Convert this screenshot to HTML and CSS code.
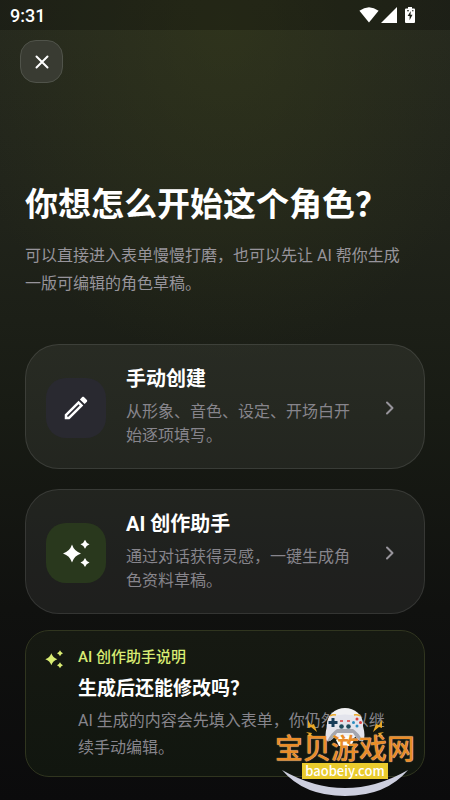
FILE: index.html
```html
<!DOCTYPE html>
<html lang="zh-CN">
<head>
<meta charset="utf-8">
<meta name="viewport" content="width=device-width, initial-scale=1">
<title>创建角色</title>
<link rel="stylesheet" href="styles.css">
</head>
<body>
<div class="screen">
  <header class="status">
    <span class="time">9:31</span>
    <span class="indicators">
      <svg width="20" height="16" viewBox="0 0 20 16"><path d="M10 15.5 0.4 3.8Q10-3.4 19.6 3.8Z"/></svg>
      <svg width="16" height="16" viewBox="0 0 16 16"><path d="M16 0V16H0Z"/></svg>
      <svg class="battery" width="10" height="16" viewBox="0 0 10 16"><path d="M3 0h4v1.500h2q1 0 1 1V15q0 1-1 1H1q-1 0-1-1V2.500q0-1 1-1h2Z"/><path class="bolt" d="M5.800 4 2.600 9h2v4.200L7.500 7.800h-2ZM2 3.300h2v1H2zM7 3.300h1.500v1H7z"/></svg>
    </span>
  </header>

  <main class="content">
    <button class="close" type="button" aria-label="关闭">
      <svg width="14" height="14" viewBox="0 0 14 14"><path d="M1.500 1.500 12.500 12.500M12.500 1.500 1.500 12.500"/></svg>
    </button>

    <section class="intro">
      <h1>你想怎么开始这个角色？</h1>
      <p>可以直接进入表单慢慢打磨，也可以先让 AI 帮你生成一版可编辑的角色草稿。</p>
    </section>

    <div class="options">
      <button class="option" type="button">
        <span class="tile">
          <svg width="30" height="30" viewBox="0 0 24 24"><path d="m14.060 9.020.92.920L5.920 19H5v-.920l9.060-9.060M17.660 3c-.250 0-.510.100-.700.290l-1.830 1.830 3.750 3.750 1.830-1.830c.390-.390.390-1.020 0-1.410l-2.340-2.340c-.200-.200-.450-.290-.710-.290zm-3.600 3.190L3 17.250V21h3.750L17.810 9.940l-3.750-3.750z"/></svg>
        </span>
        <span class="copy">
          <span class="name">手动创建</span>
          <span class="desc">从形象、音色、设定、开场白开始逐项填写。</span>
        </span>
        <svg class="chevron" width="24" height="24" viewBox="0 0 24 24"><path d="m9 6.500 5.500 5.500L9 17.500"/></svg>
      </button>

      <button class="option" type="button">
        <span class="tile tile-green">
          <svg width="30" height="30" viewBox="0 0 30 30"><path d="M11 6.500Q13.200 13.300 20 15.500 13.200 17.700 11 24.500 8.800 17.700 2 15.500 8.800 13.300 11 6.500ZM24 1.800Q25.100 5.100 28.500 6.300 25.100 7.500 24 10.800 22.900 7.500 19.500 6.300 22.900 5.100 24 1.800ZM24 20Q25.100 23.300 28.500 24.500 25.100 25.700 24 29 22.900 25.700 19.500 24.500 22.900 23.300 24 20Z"/></svg>
        </span>
        <span class="copy">
          <span class="name">AI 创作助手</span>
          <span class="desc">通过对话获得灵感，一键生成角色资料草稿。</span>
        </span>
        <svg class="chevron" width="24" height="24" viewBox="0 0 24 24"><path d="m9 6.500 5.500 5.500L9 17.500"/></svg>
      </button>
    </div>

    <section class="note">
      <svg class="spark" width="20" height="20" viewBox="0 0 30 30"><path d="M11 6.500Q13.200 13.300 20 15.500 13.200 17.700 11 24.500 8.800 17.700 2 15.500 8.800 13.300 11 6.500ZM24 1.800Q25.100 5.100 28.500 6.300 25.100 7.500 24 10.800 22.900 7.500 19.500 6.300 22.900 5.100 24 1.800ZM24 20Q25.100 23.300 28.500 24.500 25.100 25.700 24 29 22.900 25.700 19.500 24.500 22.900 23.300 24 20Z"/></svg>
      <div>
        <p class="label">AI 创作助手说明</p>
        <h2>生成后还能修改吗？</h2>
        <p class="answer">AI 生成的内容会先填入表单，你仍然可以继续手动编辑。</p>
      </div>
    </section>
  </main>

  <aside class="watermark">
    <svg class="pad" width="86" height="38" viewBox="0 0 86 38">
      <ellipse cx="43" cy="16" rx="18" ry="16" fill="#f1f1f3"/>
      <path d="M30 8Q43 5 56 8 60 9 61 18 64 29 61 33 57 35 51 25H35Q29 35 25 33 22 29 25 18 26 9 30 8Z" fill="#e3e4ec"/>
      <path d="M35 25Q29 35 25 33 30 24 35 21H51Q56 24 61 33 57 35 51 25Z" fill="#a5a6af"/>
      <path d="M34 32Q43 23 52 32L49 38H37Z" fill="#fff"/>
      <path d="M29.500 10h3v3h3v3h-3v3h-3v-3h-3v-3h3Z" fill="#173d59"/>
      <g fill="#d93f3f"><circle cx="55" cy="11" r="1.500"/><circle cx="58.500" cy="14.500" r="1.500"/></g>
      <g fill="#2b8cc0"><circle cx="51.500" cy="14.500" r="1.500"/><circle cx="55" cy="18" r="1.500"/></g>
      <g fill="#204b5b"><circle cx="39.500" cy="18.500" r="2.300"/><circle cx="46.500" cy="18.500" r="2.300"/></g>
      <path d="M38 13h3M45 13h3" stroke="#d93f3f" stroke-width="1.500"/>
      <path d="M28 8q3-2 6-1M52 7q3-1 6 1" stroke="#e8a726" stroke-width="1.500" fill="none"/>
      <path d="m6 12 3 5 3-1 3 8-6-5-3 1ZM80 12l-3 5-3-1-3 8 6-5 3 1ZM4 24l6 1-1 2 4 2-8-1 2-2ZM82 24l-6 1 1 2-4 2 8-1-2-2Z" fill="#e8a726"/>
    </svg>
    <span class="site">宝贝游戏网</span>
    <span class="domain">baobeiy.com</span>
    <svg class="smile" width="128" height="28" viewBox="0 0 128 28"><path d="M1 1Q64 37 127 1 105 27 64 27 23 27 1 1Z"/></svg>
  </aside>
</div>
</body>
</html>
```
FILE: styles.css
```css
* {
  box-sizing: border-box;
}

body {
  margin: 0;
  background: #0d0d0d;
  color: #fff;
  font-family: Roboto, "Noto Sans CJK SC", sans-serif;
}

h1, h2, p {
  margin: 0;
}

button {
  font: inherit;
  color: inherit;
  text-align: left;
}

svg {
  display: block;
  flex: none;
}

.screen {
  position: relative;
  min-height: 100vh;
  overflow: hidden;
  background:
    radial-gradient(ellipse 280px 340px at 50% 20px, rgba(60, 66, 26, 0.45), transparent),
    linear-gradient(#25281f 0%, #20231a 28%, #181b14 52%, #10110f 76%, #0b0b0c 100%);
}

.status {
  display: flex;
  align-items: center;
  justify-content: space-between;
  height: 30px;
  padding: 0 35px 0 10px;
  background: rgba(0, 0, 0, 0.24);
}

.time {
  font-size: 18px;
  font-weight: 500;
}

.indicators {
  display: flex;
  align-items: center;
  gap: 2px;
  fill: #fff;
}

.battery {
  margin-left: 6px;
}

.bolt {
  fill: #1d2018;
}

.content {
  padding: 10px 25px 24px;
}

.close {
  display: grid;
  place-items: center;
  width: 43px;
  height: 43px;
  margin-left: -5px;
  padding: 0;
  border: 1px solid #50534a;
  border-radius: 16px;
  background: #393b32;
}

.close path {
  fill: none;
  stroke: #fff;
  stroke-width: 2;
  stroke-linecap: round;
}

.intro {
  margin-top: 98px;
}

h1 {
  font-size: 33px;
  line-height: 48px;
  font-weight: 700;
}

.intro p {
  margin-top: 13px;
  padding-right: 12px;
  color: #97949b;
  font-size: 16px;
  line-height: 28px;
}

.options {
  display: grid;
  gap: 20px;
  margin-top: 46px;
}

.option {
  display: flex;
  align-items: center;
  gap: 20px;
  width: 100%;
  padding: 22px 22px 20px 20px;
  border: 1px solid rgba(255, 255, 255, 0.1);
  border-radius: 34px;
  background: rgba(255, 255, 255, 0.06);
}

.tile {
  display: grid;
  flex: none;
  place-items: center;
  width: 60px;
  height: 60px;
  border-radius: 20px;
  background: #292930;
  fill: #fff;
}

.tile-green {
  background: #29381d;
}

.copy {
  display: grid;
  flex: 1;
  gap: 9px;
}

.name {
  font-size: 20px;
  line-height: 24px;
  font-weight: 700;
}

.desc {
  color: #87858c;
  font-size: 16px;
  line-height: 24px;
}

.chevron {
  fill: none;
  stroke: #97949b;
  stroke-width: 2;
  stroke-linecap: round;
  stroke-linejoin: round;
}

.note {
  display: flex;
  gap: 14px;
  margin-top: 16px;
  padding: 14px 28px 15px 18px;
  border: 1px solid #30351f;
  border-radius: 24px;
  background: linear-gradient(#161912, #11160f);
}

.spark {
  margin-top: 4px;
  fill: #d9ec73;
}

.label {
  color: #d9ec73;
  font-size: 15px;
  line-height: 24px;
  font-weight: 500;
}

h2 {
  margin-top: 6px;
  font-size: 19px;
  line-height: 28px;
  font-weight: 700;
}

.answer {
  margin-top: 4px;
  color: #87858c;
  font-size: 16px;
  line-height: 27px;
}

.watermark {
  position: absolute;
  right: 35px;
  bottom: 4px;
  display: grid;
  justify-items: center;
  pointer-events: none;
}

.pad {
  margin-bottom: -10px;
}

.site {
  margin-bottom: -1px;
  color: #e98c28;
  font-size: 28px;
  line-height: 28px;
  font-weight: 500;
  text-shadow: 0 0 1px #fff0d0;
}

.domain {
  padding: 0 3px;
  background: #e9cb2d;
  color: #fff;
  font-family: "Noto Sans CJK SC", sans-serif;
  font-size: 13px;
  line-height: 16px;
  font-weight: 500;
}

.smile {
  margin-top: -10px;
  fill: #cdcfdf;
}
```
